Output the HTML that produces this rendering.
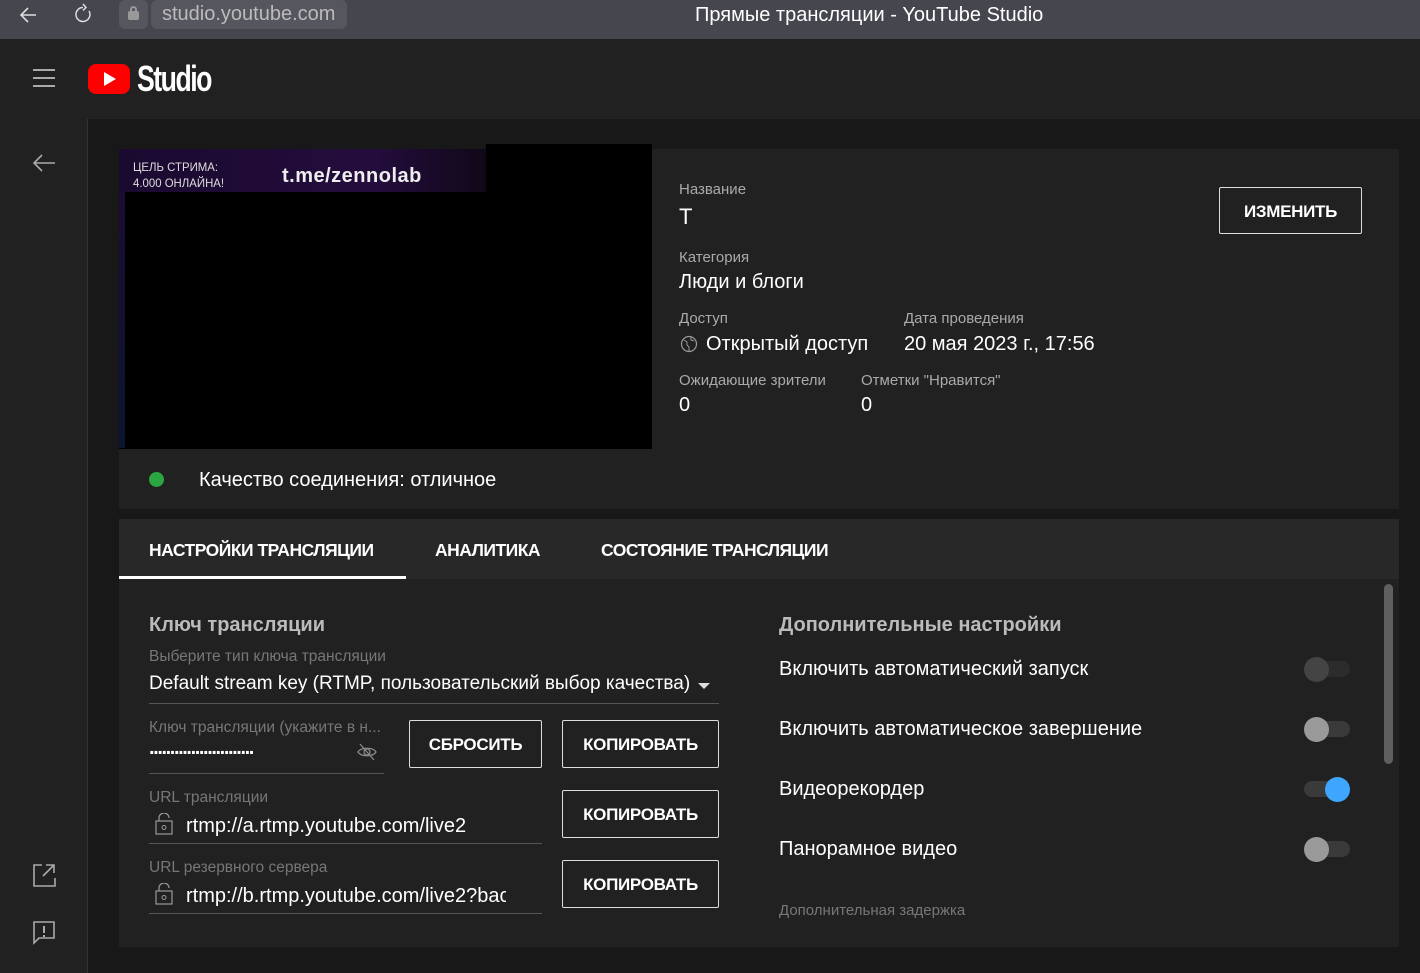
<!DOCTYPE html>
<html><head><meta charset="utf-8"><style>
*{margin:0;padding:0;box-sizing:border-box}
body{width:1420px;height:973px;background:#181818;font-family:"Liberation Sans","DejaVu Sans",sans-serif;color:#fff;position:relative;overflow:hidden}
.a{position:absolute;white-space:nowrap}
.lbl{color:#aaa;font-size:15px}
.g{color:#777;font-size:15px}
.btn{position:absolute;border:1px solid #ddd;border-radius:2px;font-weight:bold;font-size:17px;display:flex;align-items:center;justify-content:center;letter-spacing:-0.3px;padding-top:2px}
.tg{position:absolute;width:46px;height:16px;border-radius:8px;background:#3a3a3a}
.tg i{position:absolute;top:-4px;left:0;width:25px;height:25px;border-radius:50%;background:#9a9a9a}
.line{position:absolute;height:1px;background:#555}
.t{font-size:20px}
</style></head><body>
<div class="a" style="left:0;top:0;width:1420px;height:39px;background:#46464f"></div>
<svg class="a" style="left:16px;top:4px" width="26" height="22" viewBox="0 0 26 22"><path d="M20 11H5M12 4L5 11l7 7" stroke="#ddd" stroke-width="1.6" fill="none"/></svg>
<svg class="a" style="left:72px;top:2px" width="24" height="26" viewBox="0 0 24 26"><path d="M17 9a7 7 0 1 1-6-3.5M11 2l3 3.5-3 3" stroke="#ddd" stroke-width="1.5" fill="none"/></svg>
<div class="a" style="left:119px;top:0;width:29px;height:29px;background:#56565f;border-radius:6px"></div>
<div class="a" style="left:128px;top:11px;width:11px;height:9px;background:#999;border-radius:2px"></div>
<div class="a" style="left:130px;top:6px;width:7px;height:8px;border:2px solid #999;border-radius:4px 4px 0 0"></div>
<div class="a" style="left:151px;top:0;width:196px;height:29px;background:#56565f;border-radius:6px;color:#bbb;font-size:20px;padding:3px 0 0 11px">studio.youtube.com</div>
<div class="a" style="left:695px;top:4px;font-size:20px;color:#fff">Прямые трансляции - YouTube Studio</div>

<div class="a" style="left:0;top:39px;width:1420px;height:80px;background:#212121"></div>
<div class="a" style="left:33px;top:69px;width:22px;height:2px;background:#aaa;box-shadow:0 8px 0 #aaa,0 16px 0 #aaa"></div>
<div class="a" style="left:88px;top:64px;width:42px;height:30px;background:#f00;border-radius:8px"></div>
<div class="a" style="left:104px;top:72px;width:0;height:0;border-left:12px solid #fff;border-top:7px solid transparent;border-bottom:7px solid transparent"></div>
<div class="a" style="left:137px;top:58px;font-size:36px;font-weight:bold;letter-spacing:-2px;transform:scaleX(.74);transform-origin:left">Studio</div>

<div class="a" style="left:0;top:119px;width:88px;height:854px;background:#212121;border-right:1px solid #333"></div>
<svg class="a" style="left:30px;top:150px" width="28" height="26" viewBox="0 0 28 26"><path d="M25 13H4M12 5l-8 8 8 8" stroke="#aaa" stroke-width="1.6" fill="none"/></svg>
<svg class="a" style="left:31px;top:862px" width="26" height="26" viewBox="0 0 26 26"><path d="M11 3H3v21h21v-8M15 3h8v8M23 3L12 14" stroke="#aaa" stroke-width="1.6" fill="none"/></svg>
<svg class="a" style="left:32px;top:920px" width="24" height="26" viewBox="0 0 24 26"><path d="M2 2h20v16H7l-5 5z" stroke="#aaa" stroke-width="1.6" fill="none"/><path d="M12 6v7M12 15v2" stroke="#aaa" stroke-width="2"/></svg>

<div class="a" style="left:119px;top:149px;width:1280px;height:360px;background:#212121"></div>
<div class="a" style="left:119px;top:149px;width:533px;height:300px;background:#000"></div>
<div class="a" style="left:119px;top:149px;width:367px;height:43px;background:linear-gradient(90deg,#1a0a30,#240c3c 70%,#100818)"></div>
<div class="a" style="left:119px;top:192px;width:6px;height:256px;background:linear-gradient(#1c0c34,#0a1530)"></div>
<div class="a" style="left:133px;top:159px;font-size:12px;color:#ddd;line-height:16px;transform:scaleX(.95);transform-origin:left">ЦЕЛЬ СТРИМА:<br>4.000 ОНЛАЙНА!</div>
<div class="a" style="left:282px;top:165px;font-size:20px;font-weight:bold;color:#eee;letter-spacing:0.5px">t.me/zennolab</div>
<div class="a" style="left:486px;top:144px;width:166px;height:48px;background:#000"></div>

<div class="a lbl" style="left:679px;top:181px">Название</div>
<div class="a" style="left:679px;top:204px;font-size:22px">T</div>
<div class="btn" style="left:1219px;top:187px;width:143px;height:47px">ИЗМЕНИТЬ</div>
<div class="a lbl" style="left:679px;top:249px">Категория</div>
<div class="a t" style="left:679px;top:271px">Люди и блоги</div>
<div class="a lbl" style="left:679px;top:310px">Доступ</div>
<div class="a lbl" style="left:904px;top:310px">Дата проведения</div>
<svg class="a" style="left:680px;top:335px" width="18" height="18" viewBox="0 0 18 18"><circle cx="9" cy="9" r="7.5" stroke="#999" stroke-width="1.2" fill="none"/><path d="M4 5l3 2v3l2 2v4M11 2v3l3 1" stroke="#999" stroke-width="1" fill="none"/></svg>
<div class="a t" style="left:706px;top:333px">Открытый доступ</div>
<div class="a t" style="left:904px;top:333px">20 мая 2023 г., 17:56</div>
<div class="a lbl" style="left:679px;top:372px">Ожидающие зрители</div>
<div class="a lbl" style="left:861px;top:372px">Отметки "Нравится"</div>
<div class="a t" style="left:679px;top:394px">0</div>
<div class="a t" style="left:861px;top:394px">0</div>
<div class="a" style="left:149px;top:472px;width:15px;height:15px;border-radius:50%;background:#2ba640"></div>
<div class="a t" style="left:199px;top:469px">Качество соединения: отличное</div>

<div class="a" style="left:119px;top:519px;width:1280px;height:60px;background:#282828"></div>
<div class="a" style="left:149px;top:540px;font-size:17.5px;font-weight:bold;letter-spacing:-0.5px">НАСТРОЙКИ ТРАНСЛЯЦИИ</div>
<div class="a" style="left:119px;top:576px;width:287px;height:3px;background:#fff"></div>
<div class="a" style="left:435px;top:540px;font-size:17.5px;font-weight:bold;letter-spacing:-0.5px">АНАЛИТИКА</div>
<div class="a" style="left:601px;top:540px;font-size:17.5px;font-weight:bold;letter-spacing:-0.5px">СОСТОЯНИЕ ТРАНСЛЯЦИИ</div>
<div class="a" style="left:119px;top:579px;width:1280px;height:368px;background:#212121"></div>
<div class="a" style="left:1384px;top:584px;width:9px;height:180px;border-radius:5px;background:#5f5f5f"></div>

<div class="a t" style="left:149px;top:614px;color:#bbb;font-weight:bold">Ключ трансляции</div>
<div class="a g" style="left:149px;top:648px;font-size:15.5px">Выберите тип ключа трансляции</div>
<div class="a" style="left:149px;top:673px;font-size:19px">Default stream key (RTMP, пользовательский выбор качества)</div>
<div class="a" style="left:698px;top:683px;border-top:6px solid #ddd;border-left:6px solid transparent;border-right:6px solid transparent"></div>
<div class="line" style="left:149px;top:703px;width:570px"></div>
<div class="a g" style="left:149px;top:719px;font-size:15.5px">Ключ трансляции (укажите в н...</div>
<div class="a" style="left:149px;top:737px;font-size:20px;font-weight:bold;letter-spacing:-1.4px">.........................</div>
<svg class="a" style="left:356px;top:742px" width="22" height="20" viewBox="0 0 22 20"><path d="M2 10c3-5 15-5 18 0-3 5-15 5-18 0z" stroke="#888" stroke-width="1.3" fill="none"/><circle cx="11" cy="10" r="3" stroke="#888" stroke-width="1.3" fill="none"/><path d="M4 2l14 16" stroke="#888" stroke-width="1.3"/></svg>
<div class="line" style="left:149px;top:773px;width:235px"></div>
<div class="btn" style="left:409px;top:720px;width:133px;height:48px">СБРОСИТЬ</div>
<div class="btn" style="left:562px;top:720px;width:157px;height:48px">КОПИРОВАТЬ</div>
<div class="a g" style="left:149px;top:789px;font-size:15.5px">URL трансляции</div>
<svg class="a" style="left:155px;top:813px" width="18" height="22" viewBox="0 0 18 22"><rect x="1" y="8" width="16" height="13" stroke="#999" stroke-width="1.2" fill="none"/><path d="M4 8V5a5 5 0 0 1 10 0" stroke="#999" stroke-width="1.2" fill="none"/><circle cx="9" cy="14.5" r="2" stroke="#999" fill="none"/></svg>
<div class="a t" style="left:186px;top:815px">rtmp://a.rtmp.youtube.com/live2</div>
<div class="line" style="left:149px;top:843px;width:393px"></div>
<div class="btn" style="left:562px;top:790px;width:157px;height:48px">КОПИРОВАТЬ</div>
<div class="a g" style="left:149px;top:859px;font-size:15.5px">URL резервного сервера</div>
<svg class="a" style="left:155px;top:883px" width="18" height="22" viewBox="0 0 18 22"><rect x="1" y="8" width="16" height="13" stroke="#999" stroke-width="1.2" fill="none"/><path d="M4 8V5a5 5 0 0 1 10 0" stroke="#999" stroke-width="1.2" fill="none"/><circle cx="9" cy="14.5" r="2" stroke="#999" fill="none"/></svg>
<div class="a t" style="left:186px;top:885px;width:320px;overflow:hidden">rtmp://b.rtmp.youtube.com/live2?backup=1</div>
<div class="line" style="left:149px;top:913px;width:393px"></div>
<div class="btn" style="left:562px;top:860px;width:157px;height:48px">КОПИРОВАТЬ</div>

<div class="a t" style="left:779px;top:614px;color:#bbb;font-weight:bold">Дополнительные настройки</div>
<div class="a t" style="left:779px;top:658px">Включить автоматический запуск</div>
<div class="tg" style="left:1304px;top:661px;background:#2c2c2c"><i style="background:#444"></i></div>
<div class="a t" style="left:779px;top:718px">Включить автоматическое завершение</div>
<div class="tg" style="left:1304px;top:721px"><i></i></div>
<div class="a t" style="left:779px;top:778px">Видеорекордер</div>
<div class="tg" style="left:1304px;top:781px"><i style="left:21px;background:#3ea6ff"></i></div>
<div class="a t" style="left:779px;top:838px">Панорамное видео</div>
<div class="tg" style="left:1304px;top:841px"><i></i></div>
<div class="a g" style="left:779px;top:902px">Дополнительная задержка</div>
</body></html>
